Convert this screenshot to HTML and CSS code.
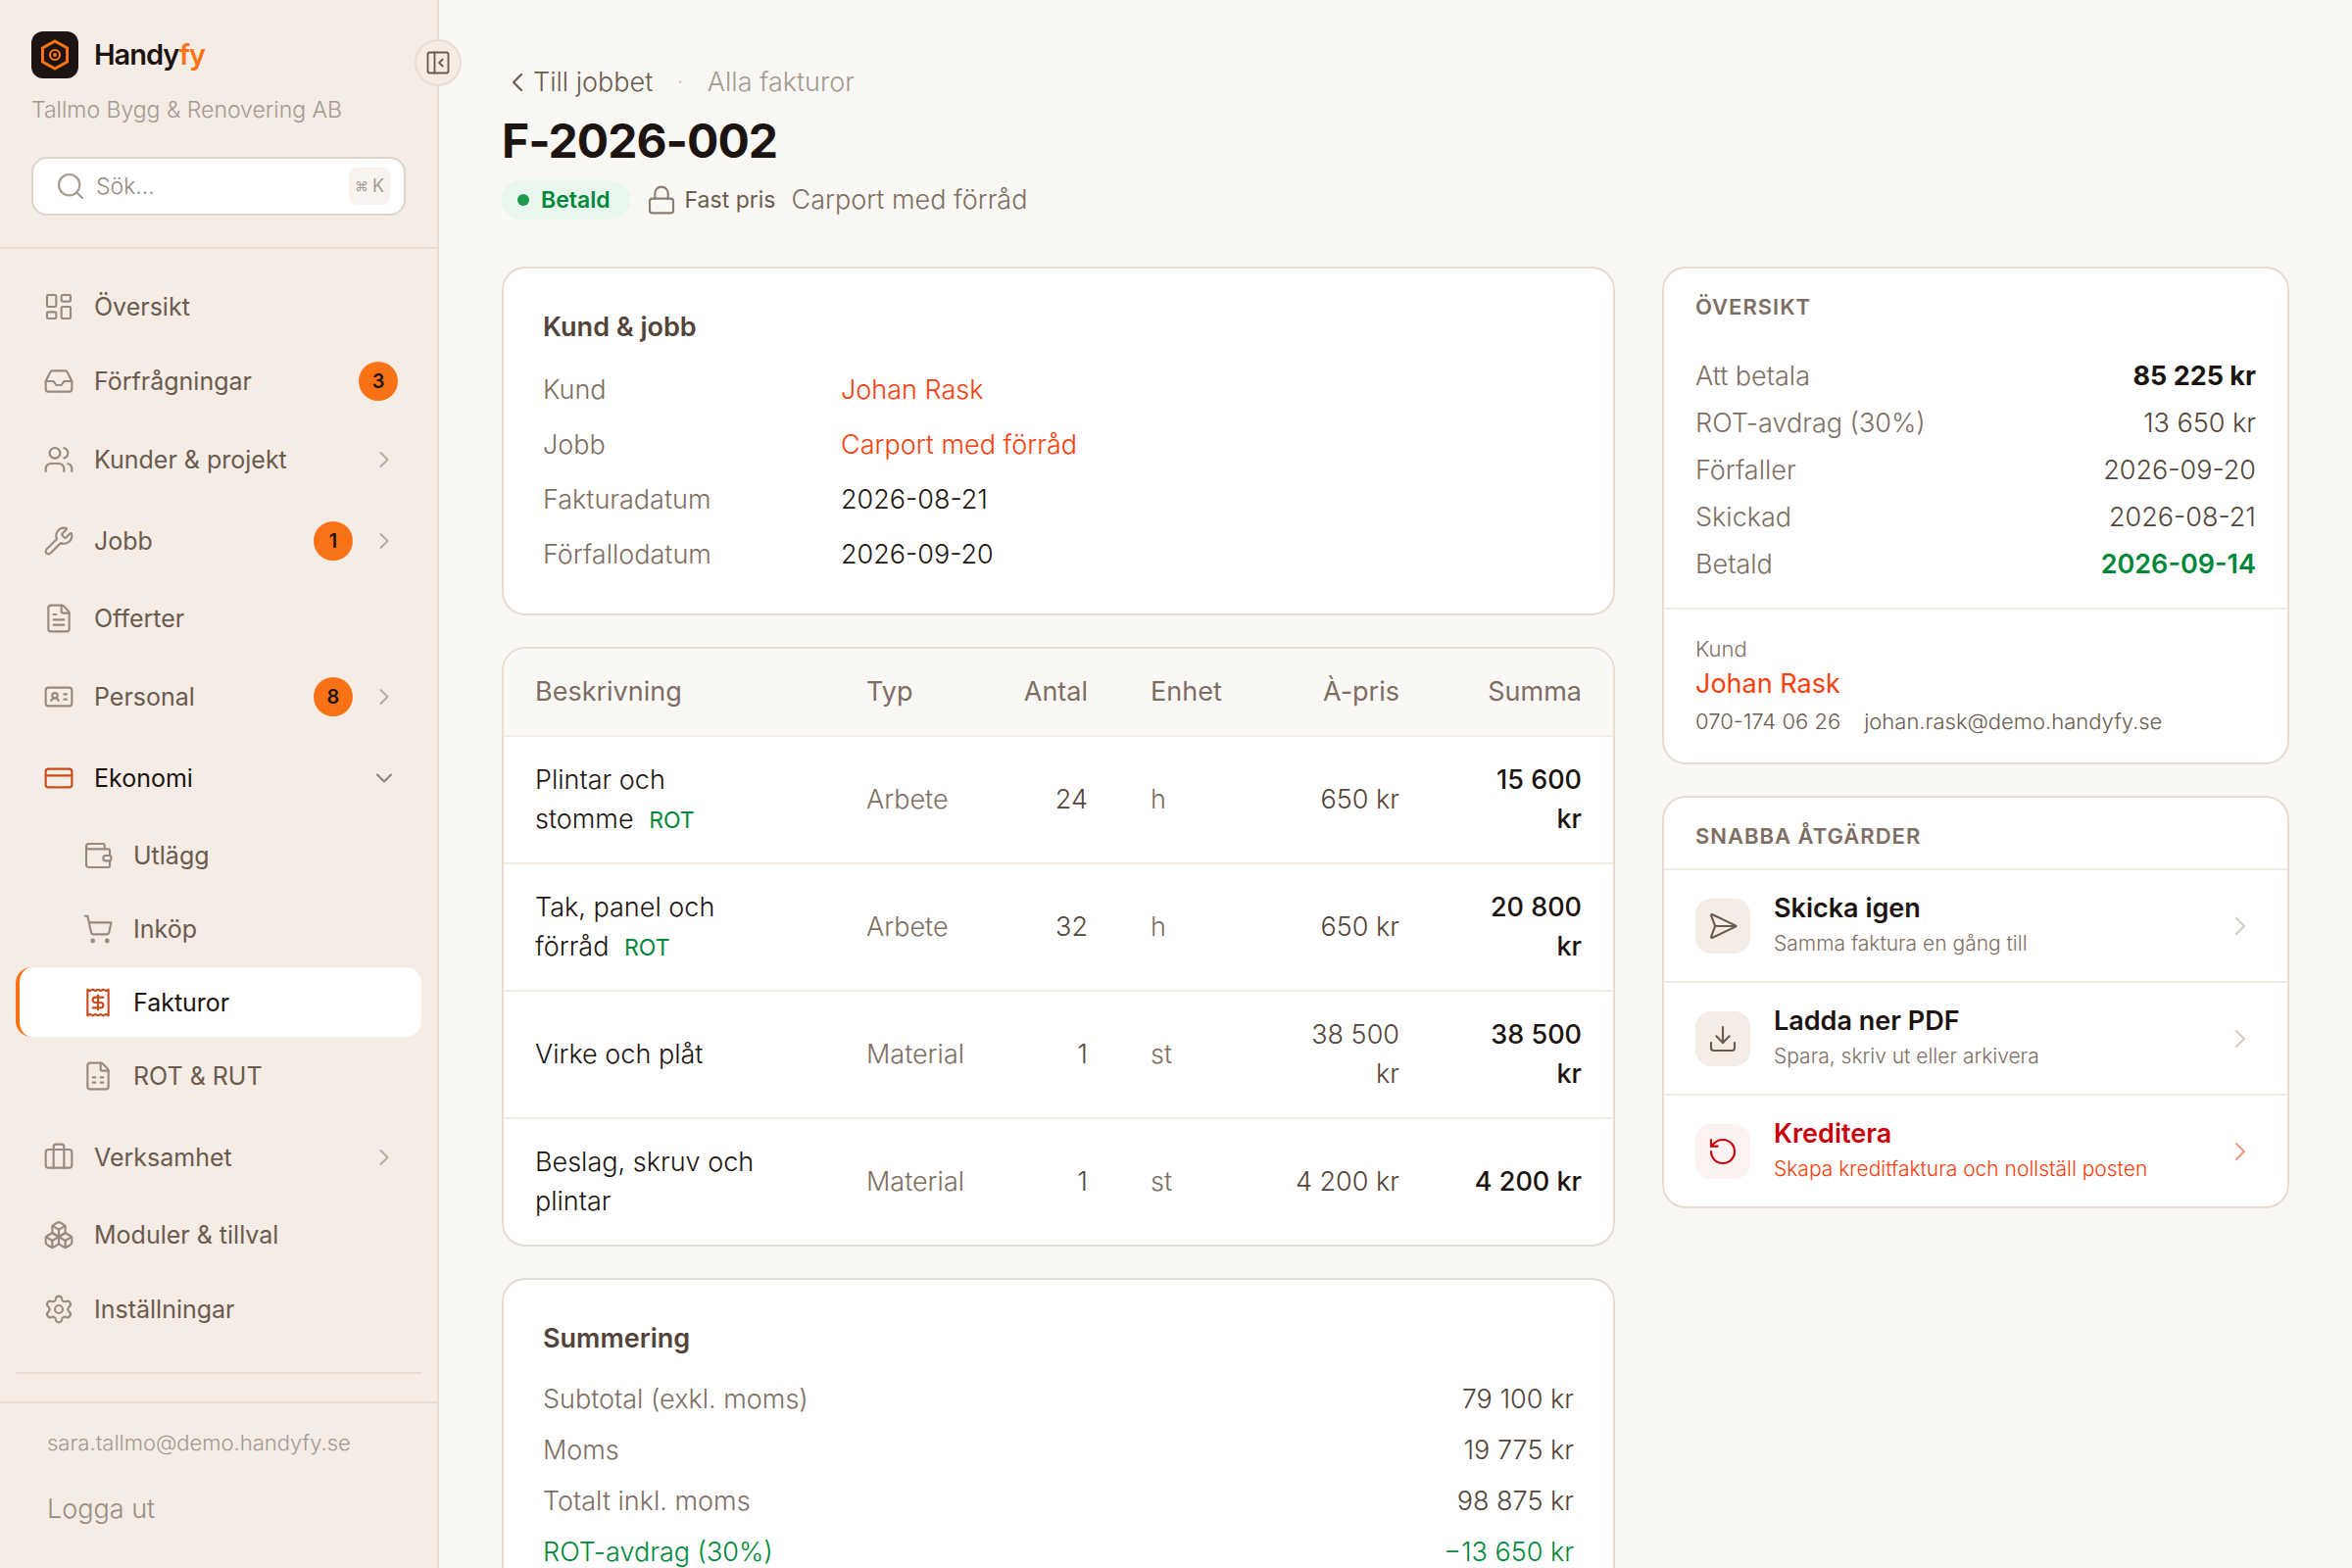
FILE: index.html
```html
<!DOCTYPE html>
<html lang="sv">

<head>
	<meta charset="UTF-8">
	<meta name="viewport" content="width=device-width, initial-scale=1.0">
	<title>F-2026-002 – Handyfy</title>

	<link rel="stylesheet" href="styles.css">
</head>

<body>
	<svg class="sprite" aria-hidden="true">
		<symbol id="i-dashboard" viewBox="0 0 24 24"><rect width="7" height="9" x="3" y="3" rx="1"/><rect width="7" height="5" x="14" y="3" rx="1"/><rect width="7" height="9" x="14" y="12" rx="1"/><rect width="7" height="5" x="3" y="16" rx="1"/></symbol>
		<symbol id="i-inbox" viewBox="0 0 24 24"><path d="M22 12h-6l-2 3h-4l-2-3H2"/><path d="M5.45 5.11 2 12v6a2 2 0 0 0 2 2h16a2 2 0 0 0 2-2v-6l-3.45-6.89A2 2 0 0 0 16.76 4H7.24a2 2 0 0 0-1.79 1.11z"/></symbol>
		<symbol id="i-users" viewBox="0 0 24 24"><path d="M16 21v-2a4 4 0 0 0-4-4H6a4 4 0 0 0-4 4v2"/><path d="M16 3.128a4 4 0 0 1 0 7.744"/><path d="M22 21v-2a4 4 0 0 0-3-3.87"/><circle cx="9" cy="7" r="4"/></symbol>
		<symbol id="i-wrench" viewBox="0 0 24 24"><path d="M14.7 6.3a1 1 0 0 0 0 1.4l1.6 1.6a1 1 0 0 0 1.4 0l3.106-3.105c.32-.322.863-.22.983.218a6 6 0 0 1-8.259 7.057l-7.91 7.91a1 1 0 0 1-2.999-3l7.91-7.91a6 6 0 0 1 7.057-8.259c.438.12.54.662.219.984z"/></symbol>
		<symbol id="i-file-text" viewBox="0 0 24 24"><path d="M6 22a2 2 0 0 1-2-2V4a2 2 0 0 1 2-2h8a2.4 2.4 0 0 1 1.704.706l3.588 3.588A2.4 2.4 0 0 1 20 8v12a2 2 0 0 1-2 2z"/><path d="M14 2v5a1 1 0 0 0 1 1h5"/><path d="M10 9H8"/><path d="M16 13H8"/><path d="M16 17H8"/></symbol>
		<symbol id="i-id-card" viewBox="0 0 24 24"><path d="M16 10h2"/><path d="M16 14h2"/><path d="M6.17 15a3 3 0 0 1 5.66 0"/><circle cx="9" cy="11" r="2"/><rect x="2" y="5" width="20" height="14" rx="2"/></symbol>
		<symbol id="i-card" viewBox="0 0 24 24"><rect width="20" height="14" x="2" y="5" rx="2"/><path d="M2 10h20"/></symbol>
		<symbol id="i-wallet" viewBox="0 0 24 24"><path d="M17 7V4a1 1 0 0 0-1-1H5a2 2 0 0 0 0 4h15a1 1 0 0 1 1 1v4h-3a2 2 0 0 0 0 4h3a1 1 0 0 0 1-1v-2a1 1 0 0 0-1-1"/><path d="M3 5v14a2 2 0 0 0 2 2h15a1 1 0 0 0 1-1v-4"/></symbol>
		<symbol id="i-cart" viewBox="0 0 24 24"><circle cx="8" cy="21" r="1"/><circle cx="19" cy="21" r="1"/><path d="M2.05 2.05h2l2.66 12.42a2 2 0 0 0 2 1.58h9.78a2 2 0 0 0 1.95-1.57l1.65-7.43H5.12"/></symbol>
		<symbol id="i-receipt" viewBox="0 0 24 24"><path d="M4 2v20l2-1 2 1 2-1 2 1 2-1 2 1 2-1 2 1V2l-2 1-2-1-2 1-2-1-2 1-2-1-2 1Z"/><path d="M16 8h-6a2 2 0 1 0 0 4h4a2 2 0 1 1 0 4H8"/><path d="M12 17.5v-11"/></symbol>
		<symbol id="i-sheet" viewBox="0 0 24 24"><path d="M6 22a2 2 0 0 1-2-2V4a2 2 0 0 1 2-2h8a2.4 2.4 0 0 1 1.704.706l3.588 3.588A2.4 2.4 0 0 1 20 8v12a2 2 0 0 1-2 2z"/><path d="M14 2v5a1 1 0 0 0 1 1h5"/><path d="M8 13h2"/><path d="M14 13h2"/><path d="M8 17h2"/><path d="M14 17h2"/></symbol>
		<symbol id="i-luggage" viewBox="0 0 24 24"><path d="M16 20V4a2 2 0 0 0-2-2h-4a2 2 0 0 0-2 2v16"/><rect width="20" height="14" x="2" y="6" rx="2"/></symbol>
		<symbol id="i-boxes" viewBox="0 0 24 24"><path d="M2.97 12.92A2 2 0 0 0 2 14.63v3.24a2 2 0 0 0 .97 1.71l3 1.8a2 2 0 0 0 2.06 0L12 19v-5.5l-5-3-4.03 2.42Z"/><path d="m7 16.5-4.74-2.85"/><path d="m7 16.5 5-3"/><path d="M7 16.5v5.17"/><path d="M12 13.5V19l3.97 2.38a2 2 0 0 0 2.06 0l3-1.8a2 2 0 0 0 .97-1.71v-3.24a2 2 0 0 0-.97-1.71L17 10.5l-5 3Z"/><path d="m17 16.5-5-3"/><path d="m17 16.5 4.74-2.85"/><path d="M17 16.5v5.17"/><path d="M7.97 4.42A2 2 0 0 0 7 6.13v4.37l5 3 5-3V6.13a2 2 0 0 0-.97-1.71l-3-1.8a2 2 0 0 0-2.06 0l-3 1.8Z"/><path d="M12 8 7.26 5.15"/><path d="m12 8 4.74-2.85"/><path d="M12 13.5V8"/></symbol>
		<symbol id="i-settings" viewBox="0 0 24 24"><path d="M9.671 4.136a2.34 2.34 0 0 1 4.659 0 2.34 2.34 0 0 0 3.319 1.915 2.34 2.34 0 0 1 2.33 4.033 2.34 2.34 0 0 0 0 3.831 2.34 2.34 0 0 1-2.33 4.033 2.34 2.34 0 0 0-3.319 1.915 2.34 2.34 0 0 1-4.659 0 2.34 2.34 0 0 0-3.32-1.915 2.34 2.34 0 0 1-2.33-4.033 2.34 2.34 0 0 0 0-3.831A2.34 2.34 0 0 1 6.35 6.051a2.34 2.34 0 0 0 3.319-1.915"/><circle cx="12" cy="12" r="3"/></symbol>
		<symbol id="i-search" viewBox="0 0 24 24"><circle cx="11" cy="11" r="8"/><path d="m21 21-4.34-4.34"/></symbol>
		<symbol id="i-panel" viewBox="0 0 24 24"><rect width="18" height="18" x="3" y="3" rx="2"/><path d="M9 3v18"/><path d="m16 15-3-3 3-3"/></symbol>
		<symbol id="i-right" viewBox="0 0 24 24"><path d="m9 18 6-6-6-6"/></symbol>
		<symbol id="i-left" viewBox="0 0 24 24"><path d="m15 18-6-6 6-6"/></symbol>
		<symbol id="i-down" viewBox="0 0 24 24"><path d="m6 9 6 6 6-6"/></symbol>
		<symbol id="i-lock" viewBox="0 0 24 24"><rect width="18" height="11" x="3" y="11" rx="2"/><path d="M7 11V7a5 5 0 0 1 10 0v4"/></symbol>
		<symbol id="i-send" viewBox="0 0 24 24"><path d="M3.714 3.048a.498.498 0 0 0-.683.627l2.843 7.627a2 2 0 0 1 0 1.396l-2.842 7.627a.498.498 0 0 0 .682.627l18-8.5a.5.5 0 0 0 0-.904z"/><path d="M6 12h16"/></symbol>
		<symbol id="i-download" viewBox="0 0 24 24"><path d="M12 15V3"/><path d="M21 15v4a2 2 0 0 1-2 2H5a2 2 0 0 1-2-2v-4"/><path d="m7 10 5 5 5-5"/></symbol>
		<symbol id="i-undo" viewBox="0 0 24 24"><path d="M3 12a9 9 0 1 0 9-9 9.75 9.75 0 0 0-6.74 2.74L3 8"/><path d="M3 3v5h5"/></symbol>
	</svg>

	<div class="app">
		<aside class="sidebar">
			<button class="toggle" type="button" aria-label="Fäll ihop menyn"><svg class="icon icon-sm"><use href="#i-panel"/></svg></button>

			<div class="sidebar-top">
				<a class="brand" href="#">
					<svg class="logo" viewBox="0 0 48 48" fill="none" stroke="#f97316">
						<rect width="48" height="48" rx="12" fill="#1c1410" stroke="none"/>
						<path d="M24 10 36.500 17v14L24 38 11.500 31V17Z" stroke-width="3"/>
						<circle cx="24" cy="24" r="5" stroke-width="2.200"/>
						<circle cx="24" cy="24" r="2" fill="#f97316" stroke="none"/>
					</svg>
					<span>Handy<span class="brand-accent">fy</span></span>
				</a>
				<p class="company">Tallmo Bygg &amp; Renovering AB</p>
				<label class="search">
					<svg class="icon"><use href="#i-search"/></svg>
					<input type="search" placeholder="Sök..." aria-label="Sök">
					<kbd><span class="cmd">⌘</span>K</kbd>
				</label>
			</div>

			<nav class="nav">
				<a class="nav-item" href="#"><svg class="icon"><use href="#i-dashboard"/></svg><span class="nav-label">Översikt</span></a>
				<a class="nav-item" href="#"><svg class="icon"><use href="#i-inbox"/></svg><span class="nav-label">Förfrågningar</span><span class="badge">3</span></a>
				<button class="nav-item nav-group" type="button"><svg class="icon"><use href="#i-users"/></svg><span class="nav-label">Kunder &amp; projekt</span><svg class="icon chevron"><use href="#i-right"/></svg></button>
				<button class="nav-item nav-group" type="button"><svg class="icon"><use href="#i-wrench"/></svg><span class="nav-label">Jobb</span><span class="badge">1</span><svg class="icon chevron"><use href="#i-right"/></svg></button>
				<a class="nav-item" href="#"><svg class="icon"><use href="#i-file-text"/></svg><span class="nav-label">Offerter</span></a>
				<button class="nav-item nav-group" type="button"><svg class="icon"><use href="#i-id-card"/></svg><span class="nav-label">Personal</span><span class="badge">8</span><svg class="icon chevron"><use href="#i-right"/></svg></button>
				<button class="nav-item nav-group open" type="button"><svg class="icon"><use href="#i-card"/></svg><span class="nav-label">Ekonomi</span><svg class="icon chevron"><use href="#i-down"/></svg></button>
				<div class="nav-sub">
					<a class="nav-item" href="#"><svg class="icon"><use href="#i-wallet"/></svg><span class="nav-label">Utlägg</span></a>
					<a class="nav-item" href="#"><svg class="icon"><use href="#i-cart"/></svg><span class="nav-label">Inköp</span></a>
					<a class="nav-item active" href="#"><svg class="icon"><use href="#i-receipt"/></svg><span class="nav-label">Fakturor</span></a>
					<a class="nav-item" href="#"><svg class="icon"><use href="#i-sheet"/></svg><span class="nav-label">ROT &amp; RUT</span></a>
				</div>
				<button class="nav-item nav-group" type="button"><svg class="icon"><use href="#i-luggage"/></svg><span class="nav-label">Verksamhet</span><svg class="icon chevron"><use href="#i-right"/></svg></button>
				<a class="nav-item" href="#"><svg class="icon"><use href="#i-boxes"/></svg><span class="nav-label">Moduler &amp; tillval</span></a>
				<a class="nav-item" href="#"><svg class="icon"><use href="#i-settings"/></svg><span class="nav-label">Inställningar</span></a>
				<hr>
			</nav>

			<div class="sidebar-foot">
				<p>sara.tallmo@demo.handyfy.se</p>
				<button type="button">Logga ut</button>
			</div>
		</aside>

		<main class="main">
			<header class="page-head">
				<div class="crumbs">
					<a class="back" href="#"><svg class="icon"><use href="#i-left"/></svg>Till jobbet</a>
					<span class="sep">·</span>
					<a class="all" href="#">Alla fakturor</a>
				</div>
				<h1>F-2026-002</h1>
				<div class="meta">
					<span class="pill">Betald</span>
					<span class="fixed"><svg class="icon"><use href="#i-lock"/></svg>Fast pris</span>
					<span>Carport med förråd</span>
				</div>
			</header>

			<div class="columns">
				<div class="stack">
					<section class="card padded">
						<h2>Kund &amp; jobb</h2>
						<dl class="facts">
							<dt>Kund</dt>
							<dd><a href="#">Johan Rask</a></dd>
							<dt>Jobb</dt>
							<dd><a href="#">Carport med förråd</a></dd>
							<dt>Fakturadatum</dt>
							<dd>2026-08-21</dd>
							<dt>Förfallodatum</dt>
							<dd>2026-09-20</dd>
						</dl>
					</section>

					<section class="card">
						<table class="lines">
							<colgroup>
								<col>
								<col class="col-type">
								<col class="col-qty">
								<col class="col-unit">
								<col class="col-price">
								<col class="col-sum">
							</colgroup>
							<thead>
								<tr>
									<th>Beskrivning</th>
									<th>Typ</th>
									<th class="num">Antal</th>
									<th>Enhet</th>
									<th class="num">À-pris</th>
									<th class="num">Summa</th>
								</tr>
							</thead>
							<tbody>
								<tr>
									<td>Plintar och <span class="keep">stomme <span class="rot">ROT</span></span></td>
									<td class="muted">Arbete</td>
									<td class="num">24</td>
									<td class="muted">h</td>
									<td class="num">650 kr</td>
									<td class="num sum">15&nbsp;600 kr</td>
								</tr>
								<tr>
									<td>Tak, panel och <span class="keep">förråd <span class="rot">ROT</span></span></td>
									<td class="muted">Arbete</td>
									<td class="num">32</td>
									<td class="muted">h</td>
									<td class="num">650 kr</td>
									<td class="num sum">20&nbsp;800 kr</td>
								</tr>
								<tr>
									<td>Virke och plåt</td>
									<td class="muted">Material</td>
									<td class="num">1</td>
									<td class="muted">st</td>
									<td class="num">38&nbsp;500 kr</td>
									<td class="num sum">38&nbsp;500 kr</td>
								</tr>
								<tr>
									<td>Beslag, skruv och plintar</td>
									<td class="muted">Material</td>
									<td class="num">1</td>
									<td class="muted">st</td>
									<td class="num">4&nbsp;200 kr</td>
									<td class="num sum">4&nbsp;200 kr</td>
								</tr>
							</tbody>
						</table>
					</section>

					<section class="card padded">
						<h2>Summering</h2>
						<dl class="totals">
							<div><dt>Subtotal (exkl. moms)</dt><dd>79 100 kr</dd></div>
							<div><dt>Moms</dt><dd>19 775 kr</dd></div>
							<div><dt>Totalt inkl. moms</dt><dd>98 875 kr</dd></div>
							<div class="green"><dt>ROT-avdrag (30%)</dt><dd>−13 650 kr</dd></div>
						</dl>
					</section>
				</div>

				<div class="stack">
					<section class="card">
						<h3>Översikt</h3>
						<dl class="overview">
							<div><dt>Att betala</dt><dd class="total">85 225 kr</dd></div>
							<div><dt>ROT-avdrag (30%)</dt><dd>13 650 kr</dd></div>
							<div><dt>Förfaller</dt><dd>2026-09-20</dd></div>
							<div><dt>Skickad</dt><dd>2026-08-21</dd></div>
							<div><dt>Betald</dt><dd class="paid">2026-09-14</dd></div>
						</dl>
						<div class="customer">
							<p>Kund</p>
							<a class="customer-name" href="#">Johan Rask</a>
							<div class="contact"><a href="#">070-174 06 26</a><a href="#">johan.rask@demo.handyfy.se</a></div>
						</div>
					</section>

					<section class="card">
						<h3>Snabba åtgärder</h3>
						<button class="action" type="button">
							<span class="action-icon"><svg class="icon"><use href="#i-send"/></svg></span>
							<span class="action-text"><strong>Skicka igen</strong><small>Samma faktura en gång till</small></span>
							<svg class="icon chevron"><use href="#i-right"/></svg>
						</button>
						<button class="action" type="button">
							<span class="action-icon"><svg class="icon"><use href="#i-download"/></svg></span>
							<span class="action-text"><strong>Ladda ner PDF</strong><small>Spara, skriv ut eller arkivera</small></span>
							<svg class="icon chevron"><use href="#i-right"/></svg>
						</button>
						<button class="action danger" type="button">
							<span class="action-icon"><svg class="icon"><use href="#i-undo"/></svg></span>
							<span class="action-text"><strong>Kreditera</strong><small>Skapa kreditfaktura och nollställ posten</small></span>
							<svg class="icon chevron"><use href="#i-right"/></svg>
						</button>
					</section>
				</div>
			</div>
		</main>
	</div>
</body>

</html>
```

FILE: styles.css
```css
:root {
	--ink: #1c1410;
	--body: #52443a;
	--nav: #6b5b4e;
	--muted: #7d6e63;
	--faint: #a39a91;
	--line: #e8dcd2;
	--line-soft: #f3ece5;
	--sand: #f4ece5;
	--page: #faf8f5;
	--orange: #f97316;
	--link: #fa3e0c;
	--green: #00883a;
	--red: #c90007;
}

* {
	box-sizing: border-box;
	margin: 0;
	padding: 0;
}

body {
	font-family: Inter, "Liberation Sans", sans-serif;
	font-size: 27px;
	font-weight: 300;
	line-height: 40px;
	color: var(--muted);
	background: var(--page);
}

a {
	color: inherit;
	text-decoration: none;
}

button,
input {
	font: inherit;
	color: inherit;
	background: none;
	border: none;
}

button {
	cursor: pointer;
	text-align: left;
}

.sprite {
	display: none;
}

.icon {
	width: 32px;
	height: 32px;
	flex-shrink: 0;
	fill: none;
	stroke: currentColor;
	stroke-width: 1.6;
	stroke-linecap: round;
	stroke-linejoin: round;
}

.icon-sm,
.nav .chevron {
	width: 28px;
	height: 28px;
}

.app {
	display: flex;
	height: 100vh;
}

/* Sidebar */
.sidebar {
	position: relative;
	display: flex;
	flex-direction: column;
	flex: 0 0 448px;
	min-width: 0;
	background: var(--sand);
	border-right: 2px solid var(--line);
}

.toggle {
	position: absolute;
	top: 40px;
	right: -25px;
	display: flex;
	align-items: center;
	justify-content: center;
	width: 48px;
	height: 48px;
	color: var(--nav);
	background: var(--sand);
	border: 2px solid var(--line);
	border-radius: 50%;
}

.sidebar-top {
	padding: 32px;
	border-bottom: 2px solid var(--line);
}

.brand {
	display: flex;
	align-items: center;
	gap: 16px;
	font-size: 29px;
	font-weight: 600;
	letter-spacing: -1px;
	color: var(--ink);
}

.logo {
	width: 48px;
	height: 48px;
}

.brand-accent {
	color: var(--orange);
}

.company {
	margin-top: 16px;
	font-size: 23px;
	line-height: 32px;
	color: var(--faint);
}

.search {
	display: flex;
	align-items: center;
	gap: 10px;
	height: 60px;
	margin-top: 32px;
	padding: 0 14px 0 22px;
	color: var(--faint);
	background: #fff;
	border: 2px solid #ddd5cc;
	border-radius: 16px;
}

.search input {
	flex: 1;
	width: 100%;
	min-width: 0;
	font-size: 23px;
	outline: none;
}

.search input::placeholder {
	color: #968b81;
}

kbd {
	display: flex;
	align-items: center;
	gap: 4px;
	height: 38px;
	padding: 0 6px;
	font-family: inherit;
	font-size: 18px;
	font-weight: 400;
	background: #f9f3ef;
	border-radius: 8px;
}

.cmd {
	font-size: 14px;
}

.nav {
	flex: 1;
	min-height: 0;
	display: flex;
	flex-direction: column;
	gap: 4px;
	padding: 23px 16px 0;
	overflow: hidden;
}

.nav-item {
	display: flex;
	align-items: center;
	flex-shrink: 0;
	height: 72px;
	padding: 0 24px;
	font-size: 25px;
	font-weight: 400;
	color: var(--nav);
	border-left: 4px solid transparent;
	border-radius: 16px;
}

.nav-item .icon {
	color: #978b80;
}

.nav-group {
	height: 79px;
}

.nav-label {
	flex: 1;
	margin-left: 20px;
}

.nav-sub {
	display: flex;
	flex-direction: column;
	flex-shrink: 0;
	gap: 4px;
	padding-bottom: 4px;
}

.nav-sub .nav-item {
	height: 71px;
	padding-left: 64px;
}

.nav .chevron {
	margin-left: 18px;
	color: #b3a9a0;
}

.open,
.active {
	color: var(--ink);
}

.nav-item.open .icon,
.nav-item.active .icon {
	color: #c84c1c;
}

.nav-item.open .chevron {
	color: #8a7d72;
}

.active {
	background: #fff;
	border-left-color: var(--orange);
}

.badge {
	width: 40px;
	height: 40px;
	font-size: 20px;
	font-weight: 600;
	text-align: center;
	color: var(--ink);
	background: var(--orange);
	border-radius: 50%;
}

hr {
	flex-shrink: 0;
	margin-top: 24px;
	border: none;
	border-top: 2px solid var(--line);
}

.sidebar-foot {
	padding: 20px 48px 40px;
	color: #978c82;
	border-top: 2px solid var(--line);
}

.sidebar-foot p {
	margin-bottom: 28px;
	font-size: 22px;
	color: var(--faint);
}

/* Page */
.main {
	flex: 1;
	min-width: 0;
	padding: 64px;
	overflow-y: auto;
	scrollbar-width: none;
}

.crumbs {
	display: flex;
	gap: 24px;
}

.back {
	display: flex;
	align-items: center;
	color: var(--nav);
}

.all {
	color: var(--faint);
}

.sep {
	color: #cfc6bd;
}

h1 {
	margin: 12px 0;
	font-size: 48px;
	line-height: 56px;
	font-weight: 700;
	letter-spacing: -1px;
	color: var(--ink);
}

.meta {
	display: flex;
	align-items: center;
	gap: 16px;
}

.pill {
	display: flex;
	align-items: center;
	gap: 12px;
	padding: 0 20px 0 16px;
	font-size: 23px;
	font-weight: 600;
	color: var(--green);
	background: #e9f6ee;
	border-radius: 20px;
}

.pill::before {
	content: "";
	width: 12px;
	height: 12px;
	background: #1c9a50;
	border-radius: 50%;
}

.fixed {
	display: flex;
	align-items: center;
	gap: 8px;
	font-size: 23px;
	font-weight: 400;
	color: var(--nav);
}

.fixed .icon {
	color: #8a7d72;
}

.columns {
	display: grid;
	grid-template-columns: minmax(0, 1fr) 640px;
	align-items: start;
	gap: 48px;
	margin-top: 48px;
}

.stack {
	display: grid;
	gap: 32px;
}

.card {
	background: #fff;
	border: 2px solid var(--line);
	border-radius: 24px;
	overflow: hidden;
}

.padded {
	padding: 40px 40px 32px;
}

h2 {
	margin-bottom: 16px;
	font-size: 27px;
	font-weight: 600;
	color: var(--body);
}

.facts {
	display: grid;
	grid-template-columns: 280px 1fr;
	column-gap: 24px;
	line-height: 56px;
}

.facts dd {
	color: var(--ink);
}

.facts a,
.customer-name {
	color: var(--link);
}

.lines {
	width: 100%;
	table-layout: fixed;
	border-collapse: separate;
	border-spacing: 0;
	color: var(--ink);
}

.col-type {
	width: 154px;
}

.col-qty {
	width: 136px;
}

.col-unit {
	width: 138px;
}

.col-price {
	width: 180px;
}

.col-sum {
	width: 186px;
}

.lines th,
.lines td {
	padding: 24px 32px;
	text-align: left;
	border-bottom: 2px solid var(--line-soft);
}

.lines tbody tr:last-child td {
	border-bottom: none;
}

.lines th {
	font-weight: 400;
	color: var(--muted);
	background: var(--page);
}

.lines .num {
	text-align: right;
	color: var(--body);
}

.lines th.num,
.lines .muted {
	color: var(--muted);
}

.lines .sum {
	padding-left: 40px;
	font-weight: 500;
	color: var(--ink);
}

.keep {
	white-space: nowrap;
}

.rot {
	margin-left: 8px;
	font-size: 23px;
	line-height: 1;
	font-weight: 400;
	color: var(--green);
}

.totals div,
.overview div {
	display: flex;
	justify-content: space-between;
}

.totals {
	line-height: 52px;
}

.totals dd,
.overview dd {
	color: var(--body);
}

.totals .green,
.totals .green dd {
	color: var(--green);
}

h3 {
	padding: 22px 32px 16px;
	font-size: 22px;
	line-height: 34px;
	font-weight: 600;
	letter-spacing: 1px;
	text-transform: uppercase;
}

.overview {
	padding: 14px 32px 20px;
	line-height: 48px;
}

.overview .total {
	font-weight: 700;
	color: var(--ink);
}

.overview .paid {
	font-weight: 600;
	color: var(--green);
}

.customer {
	padding: 22px 32px;
	font-size: 22px;
	line-height: 36px;
	border-top: 2px solid var(--line-soft);
}

.customer-name {
	display: block;
	font-size: 27px;
	font-weight: 400;
}

.contact {
	display: flex;
	gap: 24px;
	line-height: 40px;
	color: var(--nav);
}

.action {
	display: flex;
	align-items: center;
	gap: 24px;
	width: 100%;
	height: 115px;
	padding: 0 32px;
	border-top: 2px solid var(--line-soft);
}

.action-icon {
	display: flex;
	align-items: center;
	justify-content: center;
	width: 56px;
	height: 56px;
	color: var(--nav);
	background: var(--sand);
	border-radius: 16px;
}

.action-text {
	display: flex;
	flex: 1;
	flex-direction: column;
	line-height: 36px;
}

.action strong {
	font-weight: 600;
	color: var(--ink);
}

.action small {
	font-size: 21px;
}

.action .chevron {
	color: #d5cbc2;
}

.danger .action-icon {
	color: var(--red);
	background: #fbf2f1;
}

.danger strong {
	color: var(--red);
}

.danger small {
	color: var(--link);
}

.danger .chevron {
	color: #fb9a80;
}
```
